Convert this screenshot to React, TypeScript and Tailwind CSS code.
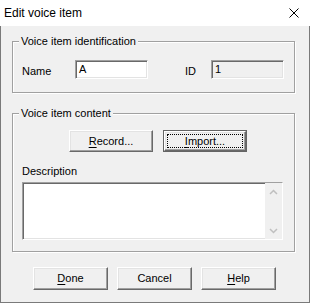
import React from "react";

const sunken =
  "border border-t-[#a0a0a0] border-l-[#a0a0a0] border-r-white border-b-white shadow-[inset_1px_1px_0_#696969,inset_-1px_-1px_0_#e3e3e3]";

const raised =
  "border border-t-white border-l-white border-r-[#696969] border-b-[#696969] shadow-[inset_-1px_-1px_0_#a0a0a0,inset_1px_1px_0_#e3e3e3] bg-[#f0f0f0]";

function Mnemonic({ text, index }: { text: string; index: number }) {
  return (
    <span>
      {text.slice(0, index)}
      <span className="underline decoration-[1px] underline-offset-[2px]">{text[index]}</span>
      {text.slice(index + 1)}
    </span>
  );
}

function Group({
  title,
  className,
  children,
}: {
  title: string;
  className?: string;
  children: React.ReactNode;
}) {
  return (
    <fieldset
      className={
        "w-[283px] border border-[#a0a0a0] pl-[9px] shadow-[1px_1px_0_#fff,inset_1px_1px_0_#fff] " +
        (className ?? "")
      }
    >
      <legend className="-ml-[3px] px-[2px] leading-[14px] bg-[#f0f0f0]">{title}</legend>
      {children}
    </fieldset>
  );
}

export default function App() {
  return (
    <div className="w-[310px] h-[303px] bg-[#f0f0f0] flex flex-col font-['Liberation_Sans',Arial,sans-serif] text-[11px] text-black">
      {/* Title bar */}
      <div className="h-[26px] bg-white flex items-center justify-between pl-[4px] pr-[11px]">
        <span className="text-[12px]">Edit voice item</span>
        <svg width="10" height="10" viewBox="0 0 10 10" className="block">
          <path d="M0.5 0.5 L9.5 9.5 M9.5 0.5 L0.5 9.5" stroke="#000" strokeWidth="1" />
        </svg>
      </div>

      {/* Body */}
      <div className="flex-1 flex flex-col border-x border-b border-[#7a7a7a] pl-[11px] pt-[8px]">
        <Group title="Voice item identification" className="pt-[12px] pb-[13px]">
          <div className="flex items-center h-[19px]">
            <span className="w-[53px] pt-[3px]">Name</span>
            <div className={"w-[73px] h-[19px] bg-white text-black flex items-center pl-[3px] " + sunken}>A</div>
            <span className="ml-[37px] w-[26px] pt-[3px]">ID</span>
            <div className={"w-[73px] h-[19px] bg-[#f0f0f0] text-black flex items-center pl-[3px] " + sunken}>1</div>
          </div>
        </Group>

        <Group title="Voice item content" className="mt-[13px] pt-[10px] pb-[11px]">
          <div className="flex gap-[10px] ml-[47px]">
            <button className={"w-[84px] h-[22px] flex items-center justify-center " + raised}>
              <Mnemonic text="Record..." index={0} />
            </button>
            <button className="w-[84px] h-[22px] border border-[#646464] p-0">
              <div className={"w-full h-full flex items-center justify-center p-[2px] " + raised}>
                <div className="w-full h-full border border-dotted border-black flex items-center justify-center">
                  <Mnemonic text="Import..." index={0} />
                </div>
              </div>
            </button>
          </div>
          <div className="mt-[12px] leading-[14px]">Description</div>
          <div className={"mt-[4px] w-[261px] h-[58px] bg-white flex justify-end " + sunken}>
            <div className="w-[17px] h-full bg-[#f0f0f0] flex flex-col justify-between">
              <div className="h-[17px] flex items-center justify-center">
                <svg width="9" height="6" viewBox="0 0 9 6">
                  <path d="M1 5 L4.5 1.5 L8 5" fill="none" stroke="#bfbfbf" strokeWidth="1.5" />
                </svg>
              </div>
              <div className="h-[17px] flex items-center justify-center">
                <svg width="9" height="6" viewBox="0 0 9 6">
                  <path d="M1 1 L4.5 4.5 L8 1" fill="none" stroke="#bfbfbf" strokeWidth="1.5" />
                </svg>
              </div>
            </div>
          </div>
        </Group>

        <div className="mt-[15px] flex gap-[9px] pl-[21px]">
          <button className={"w-[75px] h-[23px] flex items-center justify-center " + raised}>
            <Mnemonic text="Done" index={0} />
          </button>
          <button className={"w-[75px] h-[23px] flex items-center justify-center " + raised}>
            Cancel
          </button>
          <button className={"w-[75px] h-[23px] flex items-center justify-center " + raised}>
            <Mnemonic text="Help" index={0} />
          </button>
        </div>
      </div>
    </div>
  );
}
